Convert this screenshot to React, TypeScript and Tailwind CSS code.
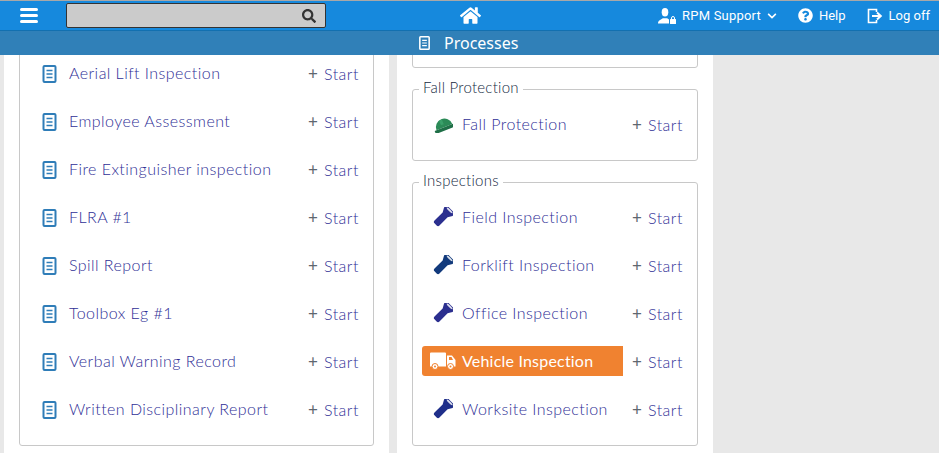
import { FaChevronDown, FaHome, FaQuestionCircle, FaSearch } from "react-icons/fa";

const font = "font-['Lato','Liberation_Sans',sans-serif]";

const leftItems = [
  "Aerial Lift Inspection",
  "Employee Assessment",
  "Fire Extinguisher inspection",
  "FLRA #1",
  "Spill Report",
  "Toolbox Eg #1",
  "Verbal Warning Record",
  "Written Disciplinary Report",
];

const inspections = [
  { name: "Field Inspection", color: "#2b2f8f" },
  { name: "Forklift Inspection", color: "#123a7c" },
  { name: "Office Inspection", color: "#2b2f8f" },
  { name: "Vehicle Inspection", color: "#2b2f8f", active: true },
  { name: "Worksite Inspection", color: "#1f2f8a" },
];

function DocIcon({ className }: { className: string }) {
  return (
    <svg viewBox="0 0 14 18" className={className} fill="none">
      <rect x="1" y="1" width="12" height="16" rx="1" stroke="currentColor" strokeWidth="2" />
      <path d="M4 5.500h6M4 9h6M4 12.500h6" stroke="currentColor" strokeWidth="1.600" />
    </svg>
  );
}

function Flashlight({ color }: { color: string }) {
  return (
    <svg viewBox="0 0 20 20" className="h-[20px] w-[20px] shrink-0" style={{ color }}>
      <g transform="rotate(45 10 10)">
        <path d="M4 -1h12v3.500l-2.500 4.500v11.500a2 2 0 0 1-2 2h-3a2 2 0 0 1-2-2v-11.500l-2.500-4.500z" fill="currentColor" />
        <ellipse cx="10" cy="0.600" rx="4" ry="1" fill="#fff" opacity="0.85" />
      </g>
    </svg>
  );
}

function HardHat() {
  return (
    <svg viewBox="0 0 20 18" className="h-[18px] w-[20px] shrink-0">
      <g transform="rotate(-22 10 10)">
        <path d="M2 12.500a8.500 8.500 0 0 1 17 0z" fill="#2b8a57" />
        <path d="M8 4.500h3v5h-3z" fill="#3aa06a" />
        <path d="M0 12.500h20v1.500c0 1-.8 1.800-2 1.800h-16c-1.200 0-2-.8-2-1.800z" fill="#1f6f47" />
      </g>
    </svg>
  );
}

function TruckIcon() {
  return (
    <svg viewBox="0 0 26 18" className="h-[18px] w-[26px] shrink-0" fill="#fff">
      <path d="M0 1.500a1 1 0 0 1 1-1h14a1 1 0 0 1 1 1v13h-16z" />
      <path d="M17 3.500h5l3.500 4.500v6.500h-8.500z" />
      <path d="M19 5h2.500l1.500 3h-4z" fill="#f08230" />
      <circle cx="5" cy="14.500" r="3" stroke="#f08230" strokeWidth="1" />
      <circle cx="5" cy="14.500" r="1" fill="#f08230" />
      <circle cx="20.500" cy="14.500" r="3" stroke="#f08230" strokeWidth="1" />
      <circle cx="20.500" cy="14.500" r="1" fill="#f08230" />
    </svg>
  );
}

function UserLock() {
  return (
    <svg viewBox="0 0 18 16" className="h-[16px] w-[18px]" fill="#fff">
      <ellipse cx="7" cy="4.200" rx="3.300" ry="4.200" />
      <path d="M0 15.500c0-3 3-4 4.800-5.200h4.400c.8.500 1.400.8 1.800 1.200v4z" />
      <rect x="12" y="11" width="6" height="5" rx="0.500" />
      <path d="M13.500 11.500v-1.500a1.500 1.500 0 0 1 3 0v1.500" fill="none" stroke="#fff" strokeWidth="1" />
    </svg>
  );
}

function LogOffIcon() {
  return (
    <svg viewBox="0 0 16 16" className="h-[16px] w-[16px]" fill="none" stroke="#fff" strokeWidth="1.600">
      <path d="M9.500 4V1.500H1.500v13h8V12" />
      <path d="M5 8h8M10 4.500 13.800 8 10 11.500" strokeWidth="2" />
    </svg>
  );
}

function StartLink({ className }: { className: string }) {
  return (
    <span className={`flex items-center pt-[2px] text-[16px] font-light leading-6 tracking-[0.5px] text-[#2f2f96] ${className}`}>
      <span className="w-[16px] text-[17px] font-normal text-[#5f6770]">+</span>
      Start
    </span>
  );
}

function NavItem({ icon, label }: { icon: React.ReactNode; label: React.ReactNode }) {
  return (
    <div className="flex items-center gap-[6px] text-[13px] text-white">
      {icon}
      {label}
    </div>
  );
}

export default function App() {
  return (
    <div className={`flex h-[453px] w-[939px] flex-col overflow-hidden bg-[#e8e8e8] ${font}`}>
      <header className="flex h-[31px] shrink-0 items-center border-t border-b border-t-[#a8a8a8] border-b-[#1270b0] bg-[#1689dd] font-['Roboto',sans-serif]">
        <div className="ml-[20px] flex w-[18px] flex-col gap-[3px]">
          <span className="h-[3px] rounded-full bg-white" />
          <span className="h-[3px] rounded-full bg-white" />
          <span className="h-[3px] rounded-full bg-white" />
        </div>
        <div className="ml-[28px] flex h-[25px] w-[260px] items-center justify-end rounded-[2px] border border-[#333] bg-[#cbcbcb] pr-[9px]">
          <FaSearch className="h-[14px] w-[14px] text-[#333]" />
        </div>
        <FaHome className="ml-[134px] h-[21px] w-[21px] text-white" />
        <div className="ml-auto mr-[9px] flex items-center gap-[21px]">
          <NavItem
            icon={<UserLock />}
            label={
              <span className="flex items-center gap-[6px] tracking-[0.2px]">
                RPM Support
                <FaChevronDown className="h-[10px] w-[10px]" />
              </span>
            }
          />
          <NavItem icon={<FaQuestionCircle className="h-[15px] w-[15px]" />} label="Help" />
          <NavItem icon={<LogOffIcon />} label="Log off" />
        </div>
      </header>

      <div className="flex h-[24px] shrink-0 items-center bg-[#3080b8] pl-[419px] font-['Noto_Sans',sans-serif] text-[16px] text-white">
        <DocIcon className="mr-[14px] h-[14px] w-[11px]" />
        Processes
      </div>

      <main className="flex min-h-0 flex-1 items-stretch overflow-hidden pl-[4px]">
        <section className="w-[385px] shrink-0 bg-white px-[15px]">
          <div className="mt-[-17px] rounded-[3px] border border-[#c8c8c8] pt-[10px] pb-[12px]">
            {leftItems.map((item) => (
              <div key={item} className="flex h-[48px] items-center pl-[22px] pr-[14px]">
                <DocIcon className="mt-[1px] h-[18px] w-[15px] shrink-0 text-[#2f7db8]" />
                <span className="ml-[12px] text-[16px] font-light leading-6 tracking-[0.45px] text-[#2f2f96]">{item}</span>
                <StartLink className="ml-auto" />
              </div>
            ))}
          </div>
        </section>

        <section className="ml-[8px] w-[316px] shrink-0 bg-white px-[15px]">
          <div className="mt-[-17px] h-[30px] rounded-[3px] border border-[#c8c8c8]" />

          <fieldset className="mt-[10px] rounded-[3px] border border-[#c8c8c8] px-[9px] pb-[12px]">
            <legend className="ml-[-3px] px-[4px] pb-[4px] text-[15px] font-light leading-[18px] tracking-[0.25px] text-[#14293f]">Fall Protection</legend>
            <div className="flex h-[48px] items-center">
              <span className="ml-[11px]"><HardHat /></span>
              <span className="ml-[9px] text-[16px] font-light leading-6 tracking-[0.45px] text-[#2f2f96]">Fall Protection</span>
              <StartLink className="ml-auto mr-[5px]" />
            </div>
          </fieldset>

          <fieldset className="mt-[10px] rounded-[3px] border border-[#c8c8c8] px-[9px] pb-[12px]">
            <legend className="ml-[-3px] px-[4px] pb-[4px] text-[15px] font-light leading-[18px] tracking-[0.25px] text-[#14293f]">Inspections</legend>
            {inspections.map((row) => (
              <div key={row.name} className="flex h-[48px] items-center">
                {row.active ? (
                  <div className="flex h-[30px] w-[201px] items-center rounded-l-[3px] bg-[#f08230] text-white">
                    <span className="ml-[8px]"><TruckIcon /></span>
                    <span className="ml-[6px] text-[16px] font-normal leading-6 tracking-[0.2px]">{row.name}</span>
                  </div>
                ) : (
                  <div className="flex w-[201px] items-center pl-[11px]">
                    <Flashlight color={row.color} />
                    <span className="ml-[9px] text-[16px] font-light leading-6 tracking-[0.45px] text-[#2f2f96]">{row.name}</span>
                  </div>
                )}
                <StartLink className="ml-auto mr-[5px]" />
              </div>
            ))}
          </fieldset>
        </section>
      </main>
    </div>
  );
}
